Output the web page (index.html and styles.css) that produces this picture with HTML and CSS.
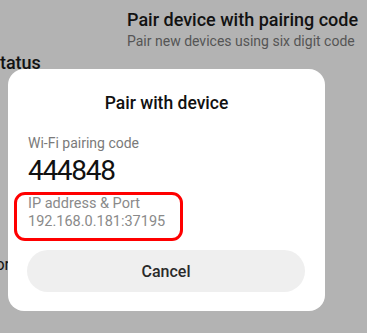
FILE: index.html
```html
<!DOCTYPE html>
<html lang="en">
<head>
  <meta charset="UTF-8" />
  <meta name="viewport" content="width=device-width, initial-scale=1.0"/>
  <title>Pair with device</title>
  <link rel="stylesheet" href="styles.css">
</head>
<body>

  <div class="settings">
    <div class="setting-row">
      <div class="setting-title">Pair device with pairing code</div>
      <div class="setting-sub">Pair new devices using six digit code</div>
    </div>
    <div class="section-head">Status</div>
    <div class="section-item">Color</div>
  </div>

  <div class="dialog">
    <div class="dialog-title">Pair with device</div>

    <div class="field">
      <div class="label">Wi-Fi pairing code</div>
      <div class="code">444848</div>
    </div>

    <div class="address">
      <div class="label">IP address &amp; Port</div>
      <div class="value">192.168.0.181:37195</div>
    </div>

    <button class="cancel">Cancel</button>
  </div>

</body>
</html>
```

FILE: styles.css
```css
* {
  box-sizing: border-box;
}

body {
  margin: 0;
  width: 367px;
  height: 333px;
  overflow: hidden;
  position: relative;
  background: #b3b3b3;
  font-family: Roboto, "Noto Sans", sans-serif;
  color: #111;
}

.settings {
  padding-top: 9px;
}

.setting-row {
  padding-left: 127px;
}

.setting-title {
  font-size: 18px;
  font-weight: 500;
  line-height: 22px;
  color: #121212;
}

.setting-sub {
  font-size: 14px;
  line-height: 20px;
  color: #555;
}

.section-head {
  margin-top: 1px;
  margin-left: -11px;
  font-size: 18px;
  font-weight: 500;
  line-height: 22px;
  color: #121212;
}

.section-item {
  margin-top: 180px;
  margin-left: -28px;
  font-size: 16px;
  line-height: 22px;
  color: #121212;
}

/* dialog over the dimmed list */
.dialog {
  position: absolute;
  left: 8px;
  top: 69px;
  width: 317px;
  height: 242px;
  background: #fff;
  border-radius: 16px;
  padding: 23px 19px 0 19px;
}

.dialog-title {
  text-align: center;
  font-size: 17.5px;
  font-weight: 500;
  line-height: 22px;
  color: #111;
}

.field {
  margin-top: 20px;
  padding-left: 1px;
}

.label {
  font-size: 14px;
  line-height: 18px;
  color: #7a7a7a;
}

.code {
  margin-top: 4px;
  font-size: 28px;
  line-height: 30px;
  letter-spacing: -1.3px;
  color: #111;
}

.address {
  margin-top: 6px;
  margin-left: -13px;
  width: 169px;
  height: 49px;
  border: 3px solid #f00;
  border-radius: 11px;
  padding: 0 0 0 11px;
}

.address .label {
  font-size: 14.5px;
  line-height: 17px;
  color: #8a8a8a;
}

.address .value {
  font-size: 14.5px;
  line-height: 20px;
  color: #8a8a8a;
}

.cancel {
  display: block;
  margin-top: 9px;
  width: 278px;
  height: 42px;
  border: none;
  border-radius: 21px;
  background: #efefef;
  font-family: Roboto, "Noto Sans", sans-serif;
  font-size: 16px;
  font-weight: 500;
  color: #2a2a2a;
}
```
